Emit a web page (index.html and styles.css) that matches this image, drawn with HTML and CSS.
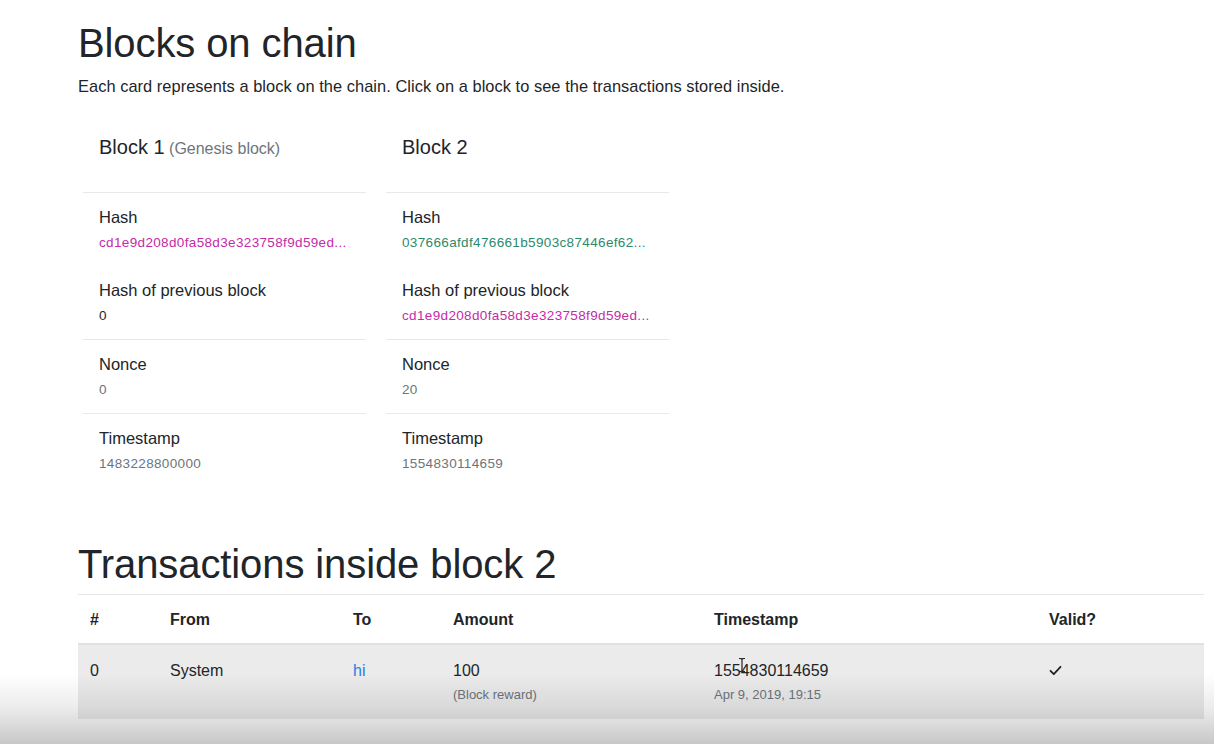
FILE: index.html
```html
<!DOCTYPE html>
<html lang="en">
<head>
<meta charset="utf-8">
<title>Blocks on chain</title>
<link rel="stylesheet" href="styles.css">
</head>
<body>
<main class="page">
  <h1 class="title">Blocks on chain</h1>
  <p class="lead">Each card represents a block on the chain. Click on a block to see the transactions stored inside.</p>

  <section class="cards">
    <div class="card">
      <div class="card-header"><span class="block-name">Block 1</span> <span class="muted-title">(Genesis block)</span></div>
      <div class="item">
        <div class="label">Hash</div>
        <div class="value hash-pink">cd1e9d208d0fa58d3e323758f9d59ed...</div>
      </div>
      <div class="item no-border">
        <div class="label">Hash of previous block</div>
        <div class="value dark">0</div>
      </div>
      <div class="item">
        <div class="label">Nonce</div>
        <div class="value">0</div>
      </div>
      <div class="item">
        <div class="label">Timestamp</div>
        <div class="value">1483228800000</div>
      </div>
    </div>

    <div class="card">
      <div class="card-header"><span class="block-name">Block 2</span></div>
      <div class="item">
        <div class="label">Hash</div>
        <div class="value hash-green">037666afdf476661b5903c87446ef62...</div>
      </div>
      <div class="item no-border">
        <div class="label">Hash of previous block</div>
        <div class="value hash-pink">cd1e9d208d0fa58d3e323758f9d59ed...</div>
      </div>
      <div class="item">
        <div class="label">Nonce</div>
        <div class="value">20</div>
      </div>
      <div class="item">
        <div class="label">Timestamp</div>
        <div class="value">1554830114659</div>
      </div>
    </div>
  </section>

  <h1 class="title second">Transactions inside block 2</h1>
  <table class="tx">
    <colgroup>
      <col class="c1"><col class="c2"><col class="c3"><col class="c4"><col class="c5"><col class="c6">
    </colgroup>
    <thead>
      <tr><th>#</th><th>From</th><th>To</th><th>Amount</th><th>Timestamp</th><th>Valid?</th></tr>
    </thead>
    <tbody>
      <tr>
        <td>0</td>
        <td>System</td>
        <td><a class="link" href="#">hi</a></td>
        <td>100<div class="sub">(Block reward)</div></td>
        <td><span class="ts">1554830114659<svg class="cursor" width="8" height="16" viewBox="0 0 8 16"><path d="M1 1.5h2l1 1 1-1h2M4 2.5v11M1 14.5h2l1-1 1 1h2" fill="none" stroke="#222" stroke-width="1.2"/></svg></span><div class="sub">Apr 9, 2019, 19:15</div></td>
        <td><svg class="check" width="13" height="11" viewBox="0 0 13 11"><path d="M1.5 5.8l3.3 3.4L11.5 1.8" fill="none" stroke="#212529" stroke-width="1.8" stroke-linecap="round" stroke-linejoin="round"/></svg></td>
      </tr>
    </tbody>
  </table>
</main>
<div class="shade"></div>
</body>
</html>
```

FILE: styles.css
```css
* { box-sizing: border-box; }
html, body { margin: 0; padding: 0; background: #ffffff; }
body {
  font-family: "Liberation Sans", Arial, Helvetica, sans-serif;
  color: #212529;
  font-size: 16px;
  line-height: 24px;
  overflow: hidden;
  height: 744px;
}
.page {
  padding: 19px 10px 0 78px;
}
.title {
  margin: 0 0 7px 0;
  font-size: 40px;
  line-height: 48px;
  font-weight: 500;
  letter-spacing: -0.1px;
}
.title.second { margin-bottom: 6px; }
.lead {
  margin: 0 0 21px 0;
  font-size: 16.4px;
  line-height: 24px;
  letter-spacing: 0.05px;
}
.cards {
  display: flex;
  gap: 20px;
  padding-left: 5px;
  margin-bottom: 53px;
}
.card { width: 283px; }
.card-header {
  padding: 16px 16px 31px 16px;
  border-bottom: 1px solid #e9e9e9;
  line-height: 24px;
}
.block-name { font-size: 20px; }
.muted-title { font-size: 16px; color: #6c757d; }
.item {
  padding: 12px 16px 13px 16px;
  border-top: 1px solid #e9e9e9;
}
.card-header + .item { border-top: 0; }
.item.no-border { border-top: 0; }
.label {
  font-size: 16.5px;
  line-height: 24px;
}
.value {
  margin-top: 4px;
  font-size: 13.5px;
  line-height: 20px;
  color: #6c757d;
  letter-spacing: 0.35px;
}
.value.dark { color: #212529; }
.hash-pink { color: #c62aa8; }
.hash-green { color: #2b8a6b; }

.tx {
  width: 1126px;
  border-collapse: collapse;
  border-top: 1px solid #e4e6e8;
}
.c1 { width: 80px; }
.c2 { width: 183px; }
.c3 { width: 100px; }
.c4 { width: 261px; }
.c5 { width: 335px; }
.c6 { width: 167px; }
.tx th {
  text-align: left;
  font-weight: bold;
  padding: 13px 12px 11px 12px;
  border-bottom: 2px solid #dfe2e5;
  vertical-align: bottom;
  font-size: 16px;
  line-height: 24px;
}
.tx td {
  padding: 14px 12px 14px 12px;
  vertical-align: top;
  background: #ebebeb;
  font-size: 16px;
  line-height: 24px;
}
.link { color: #2b7de0; text-decoration: none; }
.sub {
  margin-top: 2px;
  font-size: 13px;
  line-height: 20px;
  color: #6c757d;
}
.ts { position: relative; }
.cursor {
  position: absolute;
  left: 24px;
  top: -5px;
}
.check { margin-top: 6px; display: block; }
.shade {
  position: fixed;
  left: 0;
  right: 0;
  bottom: 0;
  height: 70px;
  background: linear-gradient(to bottom, rgba(0,0,0,0) 0%, rgba(0,0,0,0.08) 50%, rgba(0,0,0,0.22) 100%);
  pointer-events: none;
}
```
